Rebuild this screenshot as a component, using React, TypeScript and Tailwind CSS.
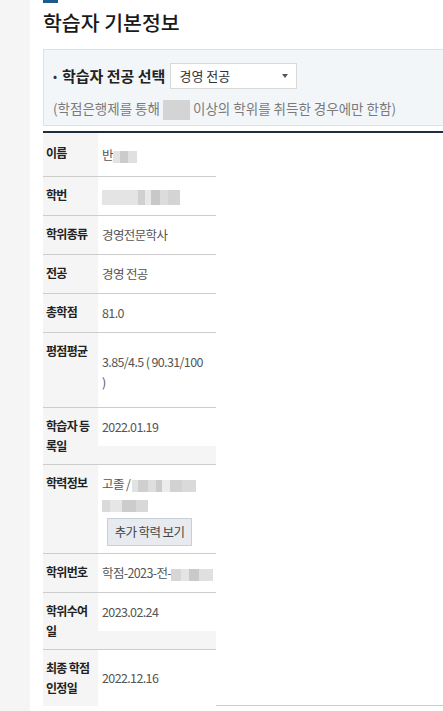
import type { ReactNode } from "react";

type Piece = [number, string];

// pixelated redaction blocks
function Blur({ parts, h = 12 }: { parts: Piece[]; h?: number }) {
	return (
		<span className="inline-flex align-middle" style={{ height: h }}>
			{parts.map(([w, c], i) => (
				<span key={i} className="h-full" style={{ width: w, background: c }} />
			))}
		</span>
	);
}

function Row({
	label,
	children,
	last,
	valueClass,
}: {
	label: ReactNode;
	children: ReactNode;
	last?: boolean;
	valueClass?: string;
}) {
	return (
		<div className={`flex items-start bg-[#f5f5f5] ${last ? "" : "border-b border-[#cdcdcd]"}`}>
			<div className="w-[55px] shrink-0 self-start py-[8px] pl-[3px] pr-[3px] text-[12px] font-bold tracking-[-0.06em] text-[#222]">
				{label}
			</div>
			<div className={`w-[118px] bg-white pl-[4px] pr-[2px] text-[#555] ${valueClass ?? "self-start py-[9px]"}`}>
				{children}
			</div>
		</div>
	);
}

export default function App() {
	return (
		<div className="flex min-h-screen w-full overflow-hidden bg-white font-['Noto_Sans_CJK_KR','Noto_Sans',sans-serif] text-[#222]">
			<aside className="w-[30px] shrink-0 bg-[#f5f5f5]" />
			<main className="min-w-0 flex-1 pl-[13px]">
				<div className="w-[480px]">
					<div className="h-[3px] w-[15px] bg-[#1d5b8c]" />
					<h1 className="mt-[5px] text-[20.5px] leading-[28px] font-medium text-[#1a1a1a]">학습자 기본정보</h1>

					<section className="mt-[13px] border border-[#dde2e8] bg-[#f3f6f9] pt-[13px] pb-[5px] pl-[9px]">
						<div className="flex items-center">
							<span className="w-[9px] text-[12px] text-[#333]">•</span>
							<span className="text-[15px] font-bold text-[#222]">학습자 전공 선택</span>
							<div className="ml-[5px] flex h-[26px] w-[127px] items-center justify-between border border-[#d9d9d9] bg-white pl-[8px] pr-[8px] text-[13px] text-[#333]">
								<span>경영 전공</span>
								<svg width="6" height="4" viewBox="0 0 6 4">
									<path d="M0 0h6L3 4z" fill="#555" />
								</svg>
							</div>
						</div>
						<p className="mt-[9px] text-[13.5px] leading-[20px] text-[#7a7a7a]">
							(학점은행제를 통해{" "}
							<span className="inline-block h-[20px] w-[27px] bg-[#d4d4d4] align-middle" /> 이상의 학위를
							취득한 경우에만 한함)
						</p>
					</section>

					<div className="mt-[5px] flex border-t-2 border-[#1f2d3d]">
						<div className="w-[173px] text-[12.5px] leading-[20px] tracking-[-0.05em]">
							<Row label={<div className="pt-[2px]">이름</div>} valueClass="self-start pt-[12px] pb-[11px]">
								반<Blur parts={[[7, "#e3e3e3"], [8, "#cbcbcb"], [9, "#e0e0e0"]]} />
							</Row>
							<Row label="학번">
								<Blur
									h={15}
									parts={[
										[36, "#e4e4e4"],
										[7, "#d0d0d0"],
										[6, "#e8e8e8"],
										[9, "#c8c8c8"],
										[8, "#dcdcdc"],
										[12, "#d4d4d4"],
									]}
								/>
							</Row>
							<Row label="학위종류">경영전문학사</Row>
							<Row label="전공">경영 전공</Row>
							<Row label="총학점">81.0</Row>
							<Row label="평점평균" valueClass="self-stretch pt-[19px] pb-[15px]">
								3.85/4.5 ( 90.31/100
								<br />)
							</Row>
							<Row label="학습자 등록일">2022.01.19</Row>
							<Row label="학력정보" valueClass="self-stretch pt-[9px] pb-[7px]">
								고졸 /{" "}
								<Blur
									parts={[
										[6, "#e2e2e2"],
										[10, "#cfcfcf"],
										[8, "#dedede"],
										[6, "#cbcbcb"],
										[8, "#ececec"],
										[12, "#d2d2d2"],
										[14, "#dadada"],
									]}
								/>
								<br />
								<Blur parts={[[8, "#dadada"], [12, "#e6e6e6"], [14, "#cccccc"], [12, "#d8d8d8"]]} />
								<div className="mt-[4px] ml-[5px] flex h-[28px] w-[85px] items-center justify-center border border-[#c8cfd8] bg-[#e7ebf0] text-[#444]">
									추가 학력 보기
								</div>
							</Row>
							<Row label="학위번호" valueClass="self-start overflow-hidden whitespace-nowrap py-[9px]">
								학점-2023-전-
								<Blur parts={[[10, "#d6d6d6"], [8, "#e4e4e4"], [10, "#c9c9c9"], [14, "#e0e0e0"]]} />
							</Row>
							<Row label="학위수여일">2023.02.24</Row>
							<Row label="최종 학점 인정일" last valueClass="flex items-center self-stretch">
								2022.12.16
							</Row>
						</div>
						<div className="flex-1 border-b border-[#cdcdcd]" />
					</div>
				</div>
			</main>
		</div>
	);
}
